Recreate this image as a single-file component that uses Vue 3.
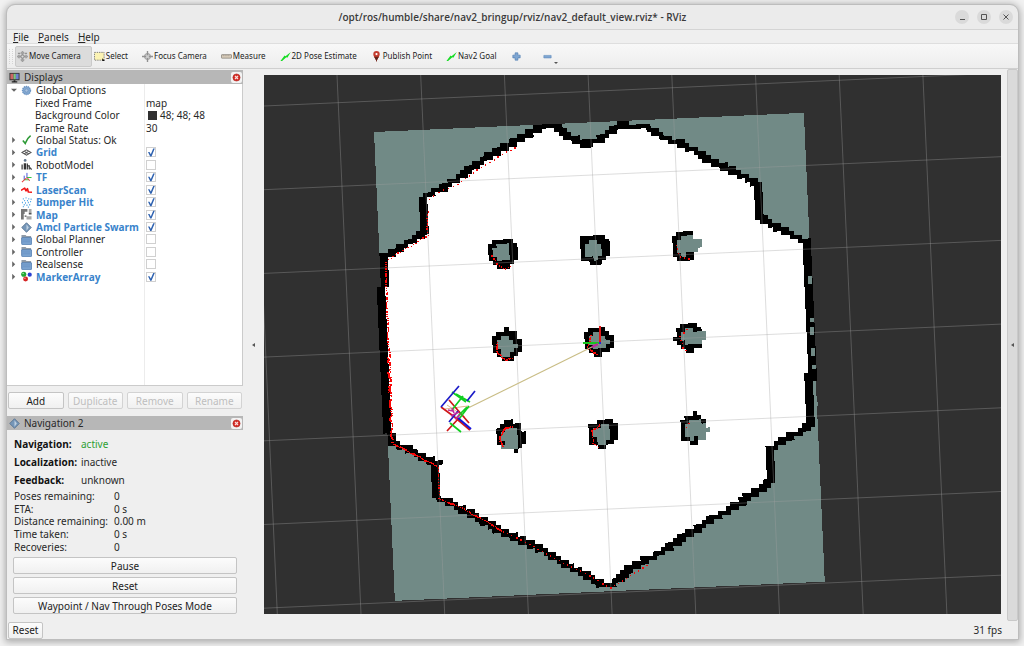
<template>
    <div class="window">
        <svg class="sprite" aria-hidden="true">
            <symbol id="icon-move" viewBox="0 0 12 12">
                <path d="M6 0l2 2.400H6.800V5.200H9.600V4L12 6 9.600 8V6.800H6.800V9.600H8L6 12 4 9.600h1.200V6.800H2.400V8L0 6 2.400 4v1.200h2.800V2.400H4z" fill="#a5a5a5" stroke="#858585" stroke-width=".5" />
                <path d="M1 2.500h2.500M8.500 2.500H11" stroke="#777" />
                <circle cx="6" cy="6" r="1.500" fill="#ddd" stroke="#777" stroke-width=".6" />
            </symbol>
            <symbol id="icon-select" viewBox="0 0 12 12">
                <rect x=".5" y="1.500" width="10.500" height="8.500" fill="#fbf3b4" stroke="#777" stroke-dasharray="1.500 1" />
                <path d="M9 8l3 3H9z" fill="#111" />
            </symbol>
            <symbol id="icon-focus" viewBox="0 0 12 12">
                <circle cx="6" cy="6" r="3.300" fill="#ccc" stroke="#999" />
                <path d="M6 0v4.500M6 7.500V12M0 6h4.500M7.500 6H12" stroke="#919191" stroke-width="1.500" />
            </symbol>
            <symbol id="icon-measure" viewBox="0 0 12 12">
                <rect x=".5" y="4" width="11" height="3.800" rx=".5" fill="#d9cdbb" stroke="#817b73" stroke-width=".8" />
                <path d="M2.500 4v1.700M4.500 4v1.700M6.500 4v1.700M8.500 4v1.700" stroke="#817b73" stroke-width=".5" />
            </symbol>
            <symbol id="icon-arrow" viewBox="0 0 12 12">
                <path d="M.5 11L5 5 6 5.600 11.800 1 8 7.300 6.900 6.800 2.300 11z" fill="#18dc25" />
            </symbol>
            <symbol id="icon-pin" viewBox="0 0 12 12">
                <path d="M6 12C5.300 8 2.500 6.500 2.500 3.600a3.500 3.500 0 0 1 7 0C9.500 6.500 6.700 8 6 12z" fill="#c23b2e" />
                <path d="M6 12C5.600 9.400 4.300 8 3.400 6.200h5.200C7.700 8 6.400 9.400 6 12z" fill="#63231b" />
                <circle cx="6" cy="3.400" r="1.200" fill="#fff" />
            </symbol>
            <symbol id="icon-plus" viewBox="0 0 12 12">
                <path d="M4.500 2h3v2.500H10v3H7.500V10h-3V7.500H2v-3h2.500z" fill="#7fa6d2" stroke="#4c7bb0" stroke-width=".7" />
            </symbol>
            <symbol id="icon-minus" viewBox="0 0 12 12">
                <path d="M2 4.800h8v2.800H2z" fill="#7fa6d2" stroke="#5b87b9" stroke-width=".6" />
            </symbol>
            <symbol id="icon-monitor" viewBox="0 0 12 12">
                <rect x=".5" y="1" width="11" height="8" fill="#333" />
                <path d="M1.500 2H5v6H1.500z" fill="#c66" />
                <path d="M5 2h2.500v6H5z" fill="#7cc77e" />
                <path d="M7.500 2h3v6h-3z" fill="#6f7fd0" />
                <path d="M5 9h2v1.200h2V11.500H3v-1.300h2z" fill="#222" />
            </symbol>
            <symbol id="icon-gear" viewBox="0 0 12 12">
                <circle cx="6" cy="6" r="4.300" fill="#86aad2" stroke="#6b93c2" stroke-width="1.600" stroke-dasharray="1.400 .7" />
                <circle cx="6" cy="6" r="1.800" fill="#a9c3e0" stroke="#5c83b3" stroke-width=".6" />
            </symbol>
            <symbol id="icon-ok" viewBox="0 0 12 12">
                <path d="M2 7l2.600 3.200C6 6.500 7.800 3.800 10.500 1.800" fill="none" stroke="#2e9a37" stroke-width="1.700" />
            </symbol>
            <symbol id="icon-grid" viewBox="0 0 12 12">
                <path d="M1 6l5-3 5 3-5 3zM3.500 4.500l5 3M8.500 4.500l-5 3" fill="none" stroke="#555" stroke-width="1.100" />
            </symbol>
            <symbol id="icon-robot" viewBox="0 0 12 12">
                <circle cx="4.500" cy="1.600" r="1.500" fill="#62788f" />
                <path d="M3 4.500h2.600V11.500H3z" fill="#333" />
                <path d="M1.200 6v5.500M6.900 5v6.500M7 7.500h2v4M10 9.500l1.500 2" fill="none" stroke="#333" stroke-width="1.300" />
            </symbol>
            <symbol id="icon-tf" viewBox="0 0 12 12">
                <path d="M6.500 6V1M3.500 8.500V4" stroke="#3a46d8" />
                <path d="M6.500 6H11.500M3.500 8.500h5" stroke="#30c545" stroke-width="1.200" />
                <path d="M6.500 6L1 11M7 6.500l2.500 3" stroke="#e33b3b" stroke-width="1.100" />
            </symbol>
            <symbol id="icon-laser" viewBox="0 0 12 12">
                <path d="M0 7l4-2.500 1.500 3L7 5l1 3.700 4 .3" fill="none" stroke="#f01818" stroke-width="1.800" stroke-linejoin="round" />
            </symbol>
            <symbol id="icon-cloud" viewBox="0 0 12 12">
                <path d="M2 2h1M5 1h1M8 2h1M3.500 4h1M6.500 4h1M1 6h1M4.500 6.500h1M7.500 6h1M10 5h1M3 8.500h1M6 9h1M9 8.500h1M2 10.500h1M7.500 11h1M10.500 2.500h1" stroke="#3d9ce0" stroke-width="1.500" />
            </symbol>
            <symbol id="icon-map" viewBox="0 0 12 12">
                <path d="M0 0h7v3H4v2.500H3v6H0z" fill="#777" />
                <path d="M8.500 0h3v4h-3zM6 8h5.500v3.500H6z" fill="#a9a9a9" />
                <path d="M8.500 4h3v2h-3zM4 7h2v1.500H4z" fill="#555" />
            </symbol>
            <symbol id="icon-diamond" viewBox="0 0 12 12">
                <path d="M6 .8L11.200 6 6 11.200.8 6z" fill="#7596b8" stroke="#526f8e" stroke-width=".9" />
                <path d="M6 2.500L8.500 6 6 9.500z" fill="#bfd0e1" />
            </symbol>
            <symbol id="icon-folder" viewBox="0 0 12 12">
                <path d="M.5 1H5l1 1.200h5V10H.5z" fill="#8f9aa6" />
                <rect x=".8" y="4" width="10.700" height="7.500" rx=".5" fill="#7ba3d0" stroke="#4d7ab0" stroke-width=".8" />
                <path d="M2 6.500h8M2 8.500h8" stroke="#5f8cbf" stroke-width=".6" />
            </symbol>
            <symbol id="icon-markers" viewBox="0 0 12 12">
                <circle cx="3" cy="3.500" r="2.800" fill="#22a834" />
                <circle cx="9.500" cy="4" r="2.300" fill="#2b3fd0" />
                <circle cx="5" cy="8.800" r="2.700" fill="#d62424" />
                <circle cx="2.300" cy="2.700" r=".8" fill="#b4ebb9" />
                <circle cx="4.300" cy="8" r=".8" fill="#f7b4b4" />
            </symbol>
            <symbol id="icon-close" viewBox="0 0 12 12">
                <circle cx="6" cy="6" r="4.800" fill="#d42a24" stroke="#a9221d" stroke-width=".7" />
                <path d="M4 4l4 4M8 4L4 8" stroke="#f8dcda" stroke-width="1.600" />
            </symbol>
        </svg>

        <header class="titlebar">
            <h1>/opt/ros/humble/share/nav2_bringup/rviz/nav2_default_view.rviz* - RViz</h1>
            <div class="window-buttons">
                <button type="button" aria-label="Minimize">
                    <svg viewBox="0 0 14 14"><path d="M5 9.500h5" /></svg>
                </button>
                <button type="button" aria-label="Maximize">
                    <svg viewBox="0 0 14 14"><path d="M4.500 4.500h5v5h-5z" /></svg>
                </button>
                <button type="button" aria-label="Close">
                    <svg viewBox="0 0 14 14"><path d="M4.500 4.500l5 5M9.500 4.500l-5 5" /></svg>
                </button>
            </div>
        </header>

        <nav class="menubar">
            <button v-for="item in menus" :key="item" type="button"><u>{{ item[0] }}</u>{{ item.slice(1) }}</button>
        </nav>

        <div class="toolbar">
            <span class="grip"></span>
            <button v-for="tool in tools" :key="tool.label" type="button" :class="{ active: tool.active }">
                <svg class="icon"><use :href="'#icon-' + tool.icon" /></svg>{{ tool.label }}
            </button>
            <button type="button" aria-label="Add tool"><svg class="icon"><use href="#icon-plus" /></svg></button>
            <button type="button" class="remove-tool" aria-label="Remove tool">
                <svg class="icon"><use href="#icon-minus" /></svg>
                <span class="caret"></span>
            </button>
        </div>

        <main>
            <aside class="dock">
                <div class="dock-title">
                    <svg class="icon"><use href="#icon-monitor" /></svg>
                    <h2>Displays</h2>
                    <button type="button" aria-label="Close Displays"><svg><use href="#icon-close" /></svg></button>
                </div>
                <div class="tree">
                    <ul>
                        <li v-for="row in displays" :key="row.name">
                            <div class="tree-name" :class="{ child: row.child, enabled: row.checked }">
                                <span v-if="!row.child" class="twisty" :class="{ open: row.open }"></span>
                                <svg v-if="row.icon" class="icon"><use :href="'#icon-' + row.icon" /></svg>
                                <span>{{ row.name }}</span>
                            </div>
                            <div class="tree-value">
                                <input v-if="row.checked !== undefined" v-model="row.checked" type="checkbox" :aria-label="row.name" />
                                <span v-if="row.swatch" class="swatch"></span>
                                <span v-if="row.value">{{ row.value }}</span>
                            </div>
                        </li>
                    </ul>
                </div>
                <div class="display-buttons">
                    <button type="button">Add</button>
                    <button type="button" disabled>Duplicate</button>
                    <button type="button" disabled>Remove</button>
                    <button type="button" disabled>Rename</button>
                </div>
                <div class="dock-title">
                    <svg class="icon"><use href="#icon-diamond" /></svg>
                    <h2>Navigation 2</h2>
                    <button type="button" aria-label="Close Navigation 2"><svg><use href="#icon-close" /></svg></button>
                </div>
                <section class="navigation">
                    <dl class="states">
                        <template v-for="s in states" :key="s.name">
                            <dt>{{ s.name }}:</dt>
                            <dd :class="s.value">{{ s.value }}</dd>
                        </template>
                    </dl>
                    <dl class="stats">
                        <template v-for="s in stats" :key="s.name">
                            <dt>{{ s.name }}:</dt>
                            <dd>{{ s.value }}</dd>
                        </template>
                    </dl>
                    <div class="nav-buttons">
                        <button type="button">Pause</button>
                        <button type="button">Reset</button>
                        <button type="button">Waypoint / Nav Through Poses Mode</button>
                    </div>
                </section>
            </aside>

            <div class="splitter"><span class="collapse"></span></div>

            <svg class="view" viewBox="264 75 737 539" preserveAspectRatio="xMidYMid slice" role="img" aria-label="Map view">
                <g :transform="mapTransform" shape-rendering="crispEdges">
                    <rect width="102.700" height="112" fill="#718a86" />
                    <polygon :points="freeSpace" fill="#fff" />
                    <path :d="wallPath" fill="#000" />
                    <path :d="pillarPaths.unknown" fill="#718a86" />
                    <path :d="pillarPaths.occupied" fill="#000" />
                </g>
                <path :d="gapPath" fill="#718a86" />
                <path :d="gridPath" class="grid-lines" />
                <path :d="scanPath" fill="#f80808" shape-rendering="crispEdges" />
                <path d="M466 409L600 343" stroke="#c9bd86" stroke-width="1.200" />
                <path d="M445 409l23-3M447 405l18 12" stroke="#e0b58c" />
                <g fill="none" stroke-width="1.700">
                    <path d="M441 407l19 14M449 400l20 23M447 431l12-13" stroke="#d01818" />
                    <path d="M452 392l14 10M463 396l-11 14M456 394l14 8M469 406l-10 13M467 407l-9 9M450 423l11 9" stroke="#10cf20" />
                    <path d="M441 407l18-21M467 401l8-10M449 422l9-11" stroke="#1c1cc8" />
                    <path d="M457 419l13 11" stroke="#d01818" stroke-width="2" />
                    <path d="M458 418l13 11" stroke="#1515dc" stroke-width="2" />
                    <path d="M448 410l5 1M452 408l2 5M451 416l8-4M455 419l5-4" stroke="#c0289a" />
                    <path d="M600 343v-17" stroke="#e01818" stroke-width="2" />
                    <path d="M583 343l16 0" stroke="#18c51c" stroke-width="2" />
                    <path d="M592 347l6-3" stroke="#c0289a" stroke-width="2" />
                </g>
                <rect x="599" y="342" width="2" height="2" fill="#2424e0" />
            </svg>

            <div class="right-dock"><span class="collapse"></span></div>
        </main>

        <footer>
            <button type="button">Reset</button>
            <span>31 fps</span>
        </footer>
    </div>
</template>

<script setup>
import { ref } from 'vue'

const menus = ['File', 'Panels', 'Help']

const tools = [
    { label: 'Move Camera', icon: 'move', active: true },
    { label: 'Select', icon: 'select' },
    { label: 'Focus Camera', icon: 'focus' },
    { label: 'Measure', icon: 'measure' },
    { label: '2D Pose Estimate', icon: 'arrow' },
    { label: 'Publish Point', icon: 'pin' },
    { label: 'Nav2 Goal', icon: 'arrow' },
]

const displays = ref([
    { name: 'Global Options', icon: 'gear', open: true },
    { name: 'Fixed Frame', child: true, value: 'map' },
    { name: 'Background Color', child: true, value: '48; 48; 48', swatch: true },
    { name: 'Frame Rate', child: true, value: '30' },
    { name: 'Global Status: Ok', icon: 'ok' },
    { name: 'Grid', icon: 'grid', checked: true },
    { name: 'RobotModel', icon: 'robot', checked: false },
    { name: 'TF', icon: 'tf', checked: true },
    { name: 'LaserScan', icon: 'laser', checked: true },
    { name: 'Bumper Hit', icon: 'cloud', checked: true },
    { name: 'Map', icon: 'map', checked: true },
    { name: 'Amcl Particle Swarm', icon: 'diamond', checked: true },
    { name: 'Global Planner', icon: 'folder', checked: false },
    { name: 'Controller', icon: 'folder', checked: false },
    { name: 'Realsense', icon: 'folder', checked: false },
    { name: 'MarkerArray', icon: 'markers', checked: true },
])

const states = [
    { name: 'Navigation', value: 'active' },
    { name: 'Localization', value: 'inactive' },
    { name: 'Feedback', value: 'unknown' },
]

const stats = [
    { name: 'Poses remaining', value: '0' },
    { name: 'ETA', value: '0 s' },
    { name: 'Distance remaining', value: '0.00 m' },
    { name: 'Time taken', value: '0 s' },
    { name: 'Recoveries', value: '0' },
]

// Occupancy grid: one unit is one cell, the whole map is slightly turned
const origin = [374, 132]
const cell = 4.19
const angle = -2.55
const mapTransform = `translate(${origin[0]} ${origin[1]}) rotate(${angle}) scale(${cell})`

const toCell = ([x, y]) => {
    const a = (-angle * Math.PI) / 180
    const dx = x - origin[0]
    const dy = y - origin[1]
    return [(dx * Math.cos(a) - dy * Math.sin(a)) / cell, (dx * Math.sin(a) + dy * Math.cos(a)) / cell]
}

const square = (c, r) => `M${c} ${r}h1v1h-1z`

const thickWalls = [
    [812, 418], [806, 241],
]
const walls = [
    [806, 241], [802, 240], [787, 232], [770, 223], [759, 217], [757, 184],
    [750, 180], [730, 170], [713, 162], [697, 152], [678, 143], [660, 135], [643, 125],
    [620, 125], [603, 137], [593, 143], [583, 144], [570, 137], [557, 128], [540, 128], [533, 131],
    [513, 143], [497, 152], [473, 166], [457, 179], [438, 190], [425, 197], [422, 203], [423, 223],
    [426, 232], [382, 259], [386, 370], [390, 442], [410, 450], [427, 460], [437, 463], [438, 498],
    [450, 503], [470, 513], [487, 523], [503, 532], [520, 540], [537, 547], [550, 555], [570, 567],
    [587, 575], [600, 583], [610, 587], [630, 568], [643, 562], [660, 553], [680, 540], [697, 528],
    [710, 520], [727, 512], [743, 500], [760, 490], [770, 482], [770, 452], [773, 447], [787, 438],
    [800, 432], [812, 425], [812, 418],
]
const freeSpace = [...walls, ...thickWalls].map(p => toCell(p).join(',')).join(' ')

const trace = (points, brush, cells) => {
    for (let i = 1; i < points.length; i++) {
        const [c0, r0] = toCell(points[i - 1])
        const [c1, r1] = toCell(points[i])
        const steps = Math.ceil(Math.hypot(c1 - c0, r1 - r0) * 3)
        for (let s = 0; s <= steps; s++) {
            const c = c0 + ((c1 - c0) * s) / steps
            const r = r0 + ((r1 - r0) * s) / steps
            brush.forEach(([bc, br]) => cells.add(`${Math.floor(c + bc)},${Math.floor(r + br)}`))
        }
    }
}
const wallCells = new Set()
trace(walls, [[-0.5, 0], [0.5, 0]], wallCells)
trace(thickWalls, [[-0.5, -0.5], [0.5, -0.5], [-0.5, 0.5], [0.5, 0.5]], wallCells)
const wallPath = [...wallCells].map(key => square(...key.split(','))).join('')

// # occupied, . unknown
const pillars = [
    { at: [488, 240], rows: [' #####', '##...##', '#....##', '#....##', '##...##', ' #####', '  ###'] },
    { at: [580, 236], rows: ['######', '##..###', '#....##', '#....##', '#....##', '###.##', '  ###'] },
    { at: [671, 232], rows: [' ####', '##...', '#......', '#......', '#.....', '##.##', ' ####'] },
    { at: [492, 329], rows: ['   #', ' #####', '##..##', '#....##', '#.....#', '##...##', ' #..##', '  ###'] },
    { at: [584, 327], rows: [' ####', '##..##', '#....##', '#.....#', '##...##', ' #####', '  ##'] },
    { at: [671, 324], rows: ['  ####', ' ##..##', ' #......', '##......', ' ##....', '  #####', '   ##'] },
    { at: [496, 421], rows: ['  ##', ' #####', '##...#', '#....##', '#....##', '##...##', ' ....#', '    #'] },
    { at: [587, 421], rows: ['  ####', '###..##', '#....##', '#....##', '##...##', '##..##', '  ##'] },
    { at: [679, 412], rows: ['   #', ' ####', '##...#', '#.....', '#......', '#.....', '##.#..', '  ##'] },
]
const pillarPaths = { occupied: '', unknown: '' }
pillars.forEach(({ at, rows }) => {
    const [c, r] = toCell(at).map(Math.round)
    rows.forEach((row, j) => [...row].forEach((mark, i) => {
        if (mark === '#') pillarPaths.occupied += square(c + i, r + j)
        if (mark === '.') pillarPaths.unknown += square(c + i, r + j)
    }))
})

const gaps = [[808, 276, 8], [810, 318, 4], [810, 327, 8], [811, 348, 8], [812, 365, 4], [814, 402, 4]]
const gapPath = gaps.map(([x, y, h]) => `M${x} ${y}h4v${h}h-4z`).join('')

let gridPath = ''
for (let k = -1; k < 8; k++) gridPath += `M${337 + 83.7 * k} 75l24 539`
for (let k = 0; k < 7; k++) gridPath += `M264 ${106 + 83.7 * k}l737 -33`

// Laser hits: polyline, distance between hits, scatter
const scans = [
    { step: 5, spread: 1, points: [[428, 199], [438, 192], [457, 183], [473, 172], [497, 157], [518, 144]] },
    { step: 3, spread: 1, points: [[427, 211], [427, 235], [405, 248], [385, 261]] },
    { step: 2, spread: 1, points: [[385, 262], [388, 350]] },
    { step: 1, spread: 2, points: [[388, 350], [391, 440]] },
    { step: 1, spread: 1, points: [[391, 442], [410, 452], [437, 466]] },
    { step: 3, spread: 1, points: [[438, 467], [438, 497]] },
    { step: 2, spread: 1, points: [[438, 497], [470, 512], [503, 531]] },
    { step: 5, spread: 1, points: [[503, 531], [550, 555], [610, 587], [630, 575], [650, 563]] },
    { step: 3, spread: 1, points: [[491, 256], [498, 265], [505, 268], [513, 264]] },
    { step: 4, spread: 1, points: [[676, 245], [679, 257], [692, 259]] },
    { step: 1, spread: 1, points: [[496, 342], [497, 353], [505, 359], [512, 358]] },
    { step: 2, spread: 1, points: [[590, 335], [587, 346], [598, 356]] },
    { step: 4, spread: 1, points: [[686, 329], [679, 336], [682, 347], [688, 352]] },
    { step: 1, spread: 1, points: [[511, 426], [503, 429], [499, 438], [502, 447]] },
    { step: 2, spread: 1, points: [[599, 424], [592, 430], [592, 443], [599, 447]] },
    { step: 4, spread: 1, points: [[688, 422], [684, 430]] },
]
const noise = n => ((Math.sin(n * 12.9898) * 43758.5453) % 1)
let scanPath = ''
let hit = 0
scans.forEach(({ step, spread, points }) => {
    for (let i = 1; i < points.length; i++) {
        const [x0, y0] = points[i - 1]
        const [x1, y1] = points[i]
        const count = Math.max(1, Math.round(Math.hypot(x1 - x0, y1 - y0) / step))
        for (let s = 0; s < count; s++) {
            hit++
            const x = x0 + ((x1 - x0) * s) / count + noise(hit) * spread * 0.7
            const y = y0 + ((y1 - y0) * s) / count + noise(hit + 500) * spread * 0.7
            scanPath += `M${x.toFixed(1)} ${y.toFixed(1)}h1.400v1.400h-1.400z`
        }
    }
})
</script>

<style>
body {
    margin: 0;
    background: #f1f1f1;
}
</style>

<style scoped>
.window {
    display: flex;
    flex-direction: column;
    box-sizing: border-box;
    height: calc(100vh - 12px);
    margin: 5px 6px 7px 7px;
    overflow: hidden;
    border-radius: 8px 8px 0 0;
    outline: 1px solid #bdbdbd;
    box-shadow: 0 1px 7px 2px rgba(0, 0, 0, 0.3);
    background: #efefef;
    color: #282828;
    font: 10px/12px "Noto Sans", "Open Sans", sans-serif;
}

.window * {
    box-sizing: border-box;
}

.sprite {
    position: absolute;
    width: 0;
    height: 0;
}

button {
    padding: 0;
    border: 0;
    background: none;
    color: inherit;
    font: inherit;
}

h1,
h2,
ul,
dl,
dd {
    margin: 0;
    padding: 0;
}

.icon {
    flex: none;
    width: 11px;
    height: 11px;
}

.titlebar {
    display: grid;
    grid-template-columns: 1fr auto 1fr;
    align-items: center;
    flex: none;
    height: 25px;
    border-bottom: 1px solid #d4d4d4;
    background: #ebebeb;
}

.titlebar h1 {
    grid-column: 2;
    color: #3a3a3a;
    font: 600 10px/12px "Open Sans", sans-serif;
}

.window-buttons {
    display: flex;
    justify-content: flex-end;
    gap: 8px;
    padding-right: 5px;
}

.window-buttons button {
    width: 14px;
    height: 14px;
    border-radius: 50%;
    background: #dadada;
}

.window-buttons svg {
    display: block;
    fill: none;
    stroke: #555;
}

.menubar {
    display: flex;
    gap: 9px;
    flex: none;
    height: 14px;
    padding-left: 6px;
    border-bottom: 1px solid #dedede;
}

.toolbar {
    display: flex;
    align-items: center;
    flex: none;
    height: 25px;
    padding-left: 2px;
    border-bottom: 1px solid #cfcfcf;
    background: linear-gradient(#f8f8f8, #ededed);
    color: #1c1c1c;
    font-size: 8px;
}

.toolbar button {
    display: flex;
    align-items: center;
    gap: 1px;
    height: 21px;
    margin-right: 12px;
    padding: 0 1px;
}

.toolbar .active {
    margin-right: 1px;
    padding-right: 10px;
    border: 1px solid #cacaca;
    border-radius: 2px;
    background: #dcdcdc;
}

.toolbar .remove-tool {
    margin-left: 6px;
}

.grip {
    width: 4px;
    height: 15px;
    margin-right: 2px;
    border: 1px dotted #d5d5d5;
    border-width: 0 1px;
}

.caret {
    align-self: flex-end;
    margin-bottom: 3px;
    border: 2px solid transparent;
    border-top-color: #555;
    border-bottom: 0;
}

main {
    display: flex;
    flex: 1;
    min-height: 0;
}

.dock {
    display: flex;
    flex-direction: column;
    flex: none;
    width: 236px;
    padding: 1px 0 7px;
}

.dock-title {
    display: flex;
    align-items: center;
    flex: none;
    gap: 4px;
    height: 14px;
    padding: 0 1px 0 2px;
    background: #b7b7b7;
}

.dock-title h2 {
    flex: 1;
    font-size: 10px;
    font-weight: 400;
}

.dock-title button {
    width: 11px;
    height: 11px;
    border-radius: 2px;
    background: #f3f3f3;
}

.dock-title button svg {
    display: block;
    width: 11px;
    height: 11px;
    padding: 1px;
}

.tree {
    flex: 1;
    min-height: 0;
    border: 1px solid #cbcbcb;
    border-width: 0 1px 1px 0;
    background: linear-gradient(90deg, #fff 137px, #ececec 137px, #ececec 138px, #fff 138px);
}

.tree ul {
    display: grid;
    grid-auto-rows: 1fr;
    height: 199px;
    list-style: none;
}

.tree li {
    display: grid;
    grid-template-columns: 138px 1fr;
    align-items: center;
    min-height: 0;
}

.tree-name,
.tree-value {
    display: flex;
    align-items: center;
    white-space: nowrap;
}

.tree-name {
    gap: 4px;
    padding-left: 4px;
}

.tree-name.child {
    padding-left: 28px;
}

.tree-name.enabled {
    color: #3883cb;
    font-family: "Open Sans", sans-serif;
    font-weight: 700;
}

.tree-value {
    gap: 3px;
    padding-left: 1px;
}

.twisty {
    width: 6px;
    height: 6px;
    background: #666;
    clip-path: polygon(20% 0, 70% 50%, 20% 100%);
}

.twisty.open {
    clip-path: polygon(0 25%, 100% 25%, 50% 75%);
}

.swatch {
    width: 9px;
    height: 9px;
    margin-left: 2px;
    background: #303030;
}

input[type="checkbox"] {
    appearance: none;
    display: block;
    width: 10px;
    height: 10px;
    margin: 0;
    outline: 1px solid #d0d0d0;
    outline-offset: -1px;
    background: #fff;
}

input[type="checkbox"]:checked::before {
    content: "";
    display: block;
    width: 10px;
    height: 10px;
    background: #2f62b0;
    clip-path: polygon(20% 45%, 35% 45%, 48% 68%, 72% 12%, 88% 12%, 55% 90%, 42% 90%);
}

.display-buttons {
    display: grid;
    grid-template-columns: repeat(4, 1fr);
    flex: none;
    gap: 4px;
    padding: 6px 1px 7px;
}

.display-buttons button,
.nav-buttons button,
footer button {
    height: 17px;
    border: 1px solid #c4c4c4;
    border-radius: 2px;
    background: linear-gradient(#fcfcfc, #f0f0f0);
    color: #1c1c1c;
}

.display-buttons button:disabled {
    border-color: #d3d3d3;
    color: #bebebe;
}

.navigation {
    flex: none;
    padding: 5px 6px 0;
}

.states,
.stats {
    display: grid;
    align-items: center;
    padding-left: 1px;
}

.states {
    grid-template-columns: 67px 1fr;
    grid-auto-rows: 18px;
}

.states dt {
    color: #111;
    font-family: "Open Sans", sans-serif;
    font-weight: 700;
}

.states .active {
    color: #2da032;
}

.stats {
    grid-template-columns: 100px 1fr;
    grid-auto-rows: 1fr;
    height: 63px;
    margin-top: 1px;
}

.nav-buttons {
    display: grid;
    gap: 3px;
    padding-top: 4px;
}

.splitter,
.right-dock {
    display: flex;
    align-items: center;
    justify-content: center;
    flex: none;
}

.splitter {
    width: 21px;
}

.collapse {
    border: 2px solid transparent;
    border-right: 3px solid #555;
    border-left: 0;
}

.view {
    flex: 1;
    min-width: 0;
    margin: 6px 6px 7px 0;
    background: #303030;
}

.grid-lines {
    fill: none;
    stroke: rgba(160, 160, 160, 0.36);
}

.right-dock {
    width: 11px;
    border: 1px solid #c9c9c9;
    border-radius: 2px;
    background: #dadada;
}

footer {
    display: flex;
    align-items: center;
    justify-content: space-between;
    flex: none;
    height: 18px;
    padding: 0 16px 0 1px;
}

footer button {
    width: 35px;
}
</style>
